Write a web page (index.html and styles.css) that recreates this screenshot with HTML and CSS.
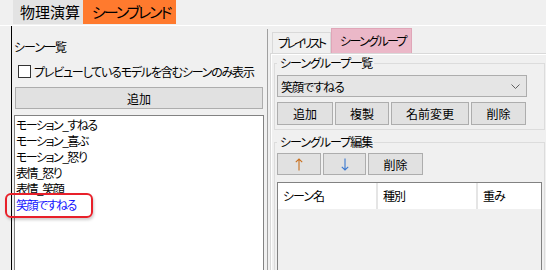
FILE: index.html
```html
<!DOCTYPE html>
<html lang="ja">
<head>
<meta charset="utf-8">
<link rel="stylesheet" href="styles.css">
</head>
<body>
<div class="tabs">
  <div class="tab tab-physics">物理演算</div>
  <div class="tab tab-blend">シーンブレンド</div>
</div>
<div class="main">
  <div class="left">
    <div class="label">シーン一覧</div>
    <div class="check-row"><span class="checkbox"></span><span>プレビューしているモデルを含むシーンのみ表示</span></div>
    <div class="btn btn-add">追加</div>
    <div class="list">
      <div class="item">モーション_すねる</div>
      <div class="item">モーション_喜ぶ</div>
      <div class="item">モーション_怒り</div>
      <div class="item">表情_怒り</div>
      <div class="item">表情_笑顔</div>
      <div class="item item-sel">笑顔ですねる</div>
    </div>
  </div>
  <div class="split"><div class="split-line"></div></div>
  <div class="right">
    <div class="subtabs">
      <div class="subtab">プレイリスト</div>
      <div class="subtab subtab-active">シーングループ</div>
    </div>
    <div class="page">
      <fieldset class="group group-list">
        <legend>シーングループ一覧</legend>
        <div class="combo"><span>笑顔ですねる</span>
          <svg class="chev" width="9" height="5" viewBox="0 0 9 5"><path d="M0.5 0.5 L4.5 4.5 L8.5 0.5" fill="none" stroke="#606060" stroke-width="1"/></svg>
        </div>
        <div class="btn-row">
          <div class="btn w56">追加</div>
          <div class="btn w54">複製</div>
          <div class="btn w78">名前変更</div>
          <div class="btn w55">削除</div>
        </div>
      </fieldset>
      <fieldset class="group group-edit">
        <legend>シーングループ編集</legend>
        <div class="btn-row">
          <div class="btn w44 b22"><svg width="8" height="13" viewBox="0 0 8 13"><path d="M4 12.5 V1 M0.8 4.2 L4 1 L7.2 4.2" fill="none" stroke="#c9701e" stroke-width="1.1"/></svg></div>
          <div class="btn w43 b22"><svg width="8" height="13" viewBox="0 0 8 13"><path d="M4 0.5 V12 M0.8 8.8 L4 12 L7.2 8.8" fill="none" stroke="#3a78d0" stroke-width="1.1"/></svg></div>
          <div class="btn w55 b22">削除</div>
        </div>
        <div class="table">
          <div class="thead">
            <div class="th c1">シーン名</div>
            <div class="th c2">種別</div>
            <div class="th c3">重み</div>
          </div>
        </div>
      </fieldset>
    </div>
  </div>
</div>
<div class="highlight"></div>
</body>
</html>
```
FILE: styles.css
```css
* { box-sizing: border-box; }
html, body { margin: 0; }
body {
  width: 546px;
  height: 270px;
  overflow: hidden;
  background: #f0f0f0;
  font-family: "Noto Sans CJK JP", sans-serif;
  font-size: 12px;
  font-feature-settings: "palt";
  letter-spacing: -1px;
  white-space: nowrap;
  color: #000;
  position: relative;
}
.tabs { display: flex; height: 25px; padding-left: 13px; }
.tab { height: 24px; line-height: 24px; font-size: 15px; }
.tab-physics { width: 70px; background: #e3e3e3; padding-left: 7px; letter-spacing: 0; }
.tab-blend { width: 93px; background: #ff7a2e; padding-left: 9px; letter-spacing: -2px; }

.main { display: flex; height: 245px; border-top: 1px solid #fff; }
.left {
  margin-left: 11px;
  width: 253px;
  border-left: 1px solid #000;
  padding-left: 2px;
  padding-top: 13px;
  display: flex;
  flex-direction: column;
}
.label { height: 16px; line-height: 16px; }
.check-row { margin-top: 8px; height: 16px; display: flex; align-items: center; gap: 3px; padding-left: 4px; letter-spacing: -1.2px; }
.checkbox { width: 13px; height: 13px; border: 1px solid #333; background: #fff; flex: none; }
.btn {
  background: #e1e1e1;
  border: 1px solid #adadad;
  display: flex;
  align-items: center;
  justify-content: center;
  height: 23px;
  letter-spacing: 0;
}
.btn-add { margin-top: 8px; margin-left: 1px; width: 248px; height: 22px; }
.list {
  margin-top: 6px;
  width: 250px;
  flex: 1;
  background: #fff;
  border: 1px solid #828282;
  border-bottom: none;
  padding: 1px 0 0 1px;
}
.item { height: 16px; line-height: 16px; letter-spacing: -1.5px; }
.item-sel { color: #1414ff; }

.split { width: 6px; display: flex; justify-content: center; padding-top: 3px; }
.split-line { width: 1px; background: #a0a0a0; }

.right { flex: 1; padding-top: 2px; display: flex; flex-direction: column; }
.subtabs { display: flex; height: 25px; align-items: flex-end; padding-left: 2px; }
.subtab {
  height: 21px;
  line-height: 20px;
  width: 59px;
  padding-left: 5px;
  border: 1px solid #d9d9d9;
  border-bottom: none;
  letter-spacing: -2.6px;
  overflow: hidden;
}
.subtab-active { height: 25px; line-height: 24px; width: 81px; padding-left: 8px; background: #ebb8c8; border-color: #e0a6b8; letter-spacing: -1.6px; }
.page {
  flex: 1;
  border: 1px solid #d9d9d9;
  border-right: none;
  border-bottom: none;
  box-shadow: inset 1px 1px 0 #fff;
  padding-left: 3px;
  padding-top: 1px;
}
.group {
  margin: 0;
  width: 271px;
  border: 1px solid #dcdcdc;
  padding: 0 2px 4px 2px;
  min-width: 0;
}
.group legend { padding: 0 2px 0 3px; margin: 0; line-height: 16px; height: 16px; }
.combo {
  margin-top: 4px;
  width: 250px;
  height: 22px;
  background: #e5e5e5;
  border: 1px solid #adadad;
  display: flex;
  align-items: center;
  justify-content: space-between;
  padding: 0 6px 0 3px;
}
.btn-row { display: flex; gap: 2px; margin-top: 5px; }
.w56 { width: 56px; }
.w54 { width: 54px; }
.w78 { width: 78px; }
.w55 { width: 55px; }
.w44 { width: 44px; }
.w43 { width: 43px; }
.b22 { height: 22px; }
.group-edit { margin-top: 4px; height: 140px; border-bottom: none; }
.group-edit .btn-row { margin-top: 3px; }
.table {
  margin-top: 7px;
  width: 265px;
  height: 100px;
  border: 1px solid #828282;
  border-bottom: none;
}
.thead { display: flex; height: 26px; background: #fff; }
.th { height: 26px; line-height: 26px; padding-left: 5px; border-right: 2px solid #e5e5e5; }
.c1 { width: 100px; }
.c2 { width: 100px; }
.c3 { flex: 1; border-right: none; }

.highlight {
  position: absolute;
  left: 5px;
  top: 193px;
  width: 88px;
  height: 25px;
  border: 2px solid #e8202a;
  border-radius: 6px;
  box-shadow: 1px 2px 3px rgba(0,0,0,0.2);
}
```
